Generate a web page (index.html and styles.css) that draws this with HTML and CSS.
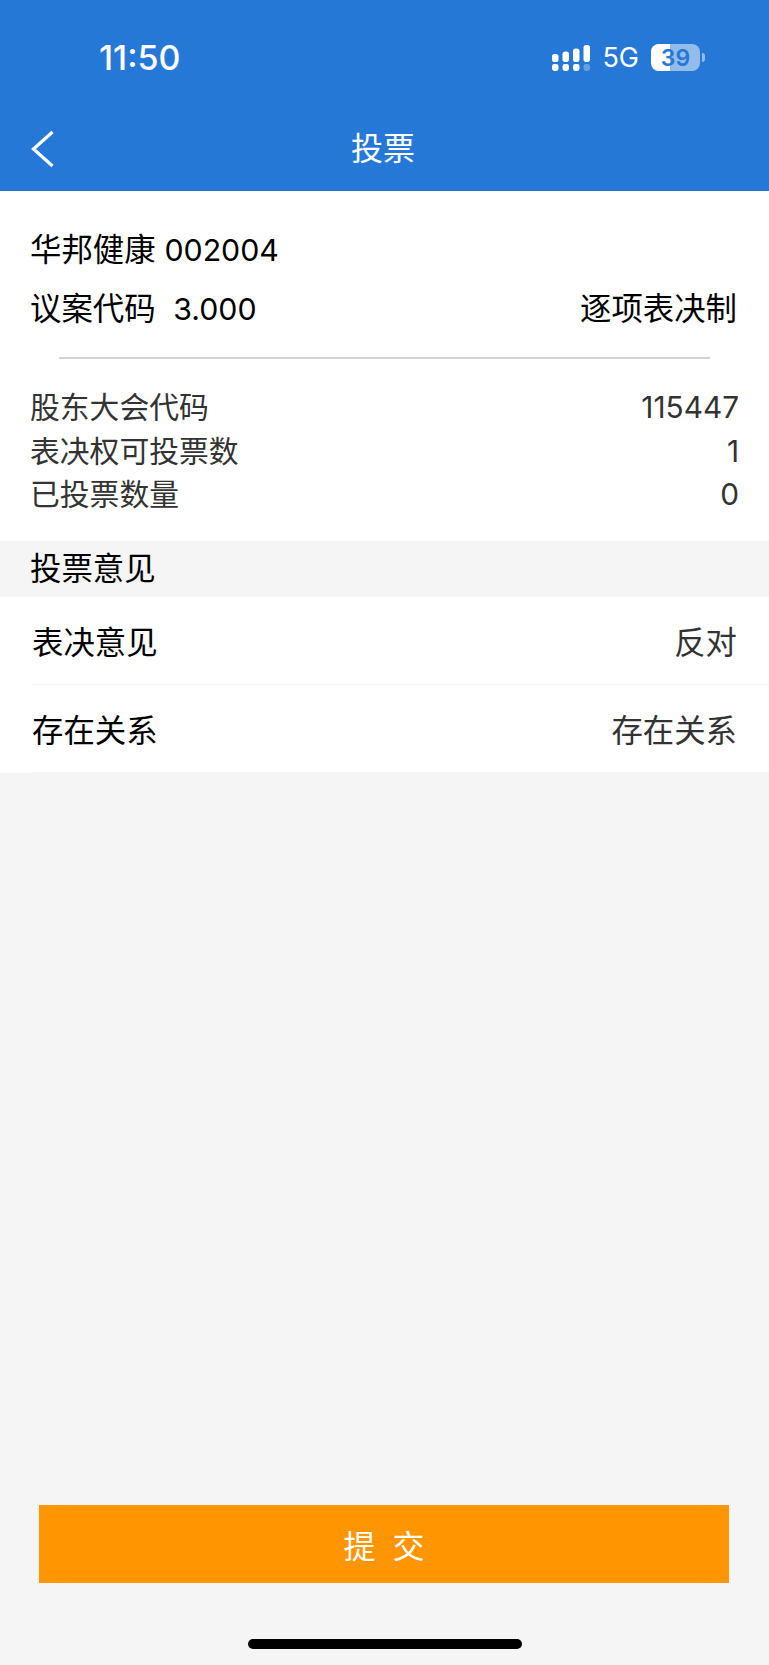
FILE: index.html
```html
<!DOCTYPE html>
<html lang="zh-CN">
<head>
    <meta charset="UTF-8">
    <meta name="viewport" content="width=device-width, initial-scale=1.0">
    <title>投票</title>
    <link rel="stylesheet" href="styles.css">
</head>
<body>
    <div class="page">
        <header class="top">
            <div class="status-bar">
                <span class="clock">11:50</span>
                <div class="status-right">
                    <svg class="signal" width="38" height="26" viewBox="0 0 38 26">
                        <rect x="0" y="9" width="6.5" height="8" rx="2.6" fill="#fff"/>
                        <rect x="10.5" y="6.5" width="6.5" height="10.5" rx="2.8" fill="#fff"/>
                        <rect x="21" y="3.5" width="6.5" height="13.5" rx="2.8" fill="#fff"/>
                        <rect x="31.5" y="0" width="6.5" height="17" rx="2.8" fill="#fff"/>
                        <rect x="0" y="19" width="6.5" height="7" rx="2.4" fill="#fff"/>
                        <rect x="10.5" y="19" width="6.5" height="7" rx="2.4" fill="#fff"/>
                        <rect x="21" y="19" width="6.5" height="7" rx="2.4" fill="#fff"/>
                        <rect x="31.5" y="19" width="6.5" height="7" rx="2.4" fill="#fff" opacity="0.3"/>
                    </svg>
                    <span class="network">5G</span>
                    <div class="battery">
                        <span class="battery-fill"></span>
                        <span class="battery-level">39</span>
                    </div>
                    <span class="battery-cap"></span>
                </div>
            </div>
            <div class="nav-bar">
                <svg class="back" width="26" height="38" viewBox="0 0 26 38">
                    <path d="M23.5 2 L4.5 19 L23.5 36" fill="none" stroke="#fff" stroke-width="3.2"/>
                </svg>
                <h1 class="nav-title">投票</h1>
            </div>
        </header>

        <section class="summary">
            <div class="summary-head">
                <p class="line">华邦健康 <span class="num">002004</span></p>
                <p class="line line-split"><span>议案代码&nbsp;&nbsp;<span class="num">3.000</span></span><span>逐项表决制</span></p>
            </div>
            <div class="divider"></div>
            <div class="summary-info">
                <p class="info-row"><span>股东大会代码</span><span>115447</span></p>
                <p class="info-row"><span>表决权可投票数</span><span>1</span></p>
                <p class="info-row"><span>已投票数量</span><span>0</span></p>
            </div>
        </section>

        <div class="section-title">投票意见</div>

        <section class="options">
            <div class="option-row"><span class="option-name">表决意见</span><span class="option-value">反对</span></div>
            <div class="option-row"><span class="option-name">存在关系</span><span class="option-value">存在关系</span></div>
        </section>

        <div class="spacer"></div>

        <button class="btn-submit">提 交</button>
        <div class="home-bar"></div>
    </div>
</body>
</html>
```

FILE: styles.css
```css
body {
    margin: 0;
    background-color: #f5f5f5;
    font-family: Inter, "Noto Sans CJK SC", sans-serif;
    color: #000;
}
p {
    margin: 0;
}
.page {
    display: flex;
    flex-direction: column;
    min-height: 1665px;
}

/* blue header with status bar and title */
.top {
    height: 191px;
    background-color: #2678d6;
    color: #fff;
}
.status-bar {
    height: 108px;
    display: flex;
    justify-content: space-between;
    align-items: flex-start;
    box-sizing: border-box;
    padding: 39px 64px 0 99px;
}
.clock {
    font-size: 34px;
    font-weight: 500;
    line-height: 37px;
}
.status-right {
    display: flex;
    align-items: center;
    height: 37px;
}
.signal {
    margin-right: 12px;
}
.network {
    font-size: 27px;
    margin-right: 12px;
}
.battery {
    display: flex;
    justify-content: center;
    align-items: center;
    position: relative;
    width: 49px;
    height: 27px;
    border-radius: 8px;
    overflow: hidden;
    background-color: rgba(255, 255, 255, 0.5);
}
.battery-fill {
    position: absolute;
    left: 0;
    top: 0;
    bottom: 0;
    width: 39%;
    background-color: #fff;
}
.battery-level {
    position: relative;
    font-size: 23px;
    font-weight: 600;
    color: #2678d6;
}
.battery-cap {
    width: 3px;
    height: 9px;
    margin-left: 2px;
    border-radius: 0 3px 3px 0;
    background-color: rgba(255, 255, 255, 0.5);
}
.nav-bar {
    position: relative;
    height: 83px;
    box-sizing: border-box;
    padding: 0 3px 8px 0;
    display: flex;
    justify-content: center;
    align-items: center;
}
.back {
    position: absolute;
    left: 29px;
    top: 22px;
}
.nav-title {
    margin: 0;
    font-size: 32px;
    font-weight: normal;
}

/* stock and meeting details */
.summary {
    background-color: #fff;
    padding-top: 30px;
    height: 350px;
    box-sizing: border-box;
}
.summary-head {
    padding: 0 32px 0 30px;
}
.line {
    font-size: 31.4px;
    line-height: 59px;
}
.line-split {
    display: flex;
    justify-content: space-between;
}
.num {
    font-size: 30.3px;
}
.divider {
    height: 2px;
    margin: 18px 59px 0;
    background-color: #d4d4d4;
}
.summary-info {
    padding: 27px 30px 0;
}
.info-row {
    display: flex;
    justify-content: space-between;
    font-size: 29.8px;
    line-height: 43.5px;
    color: #333;
}

.section-title {
    height: 56px;
    padding-left: 30px;
    font-size: 31.4px;
    line-height: 56px;
    background-color: #f5f5f5;
}

/* opinion rows */
.options {
    background-color: #fff;
    padding-left: 32px;
}
.option-row {
    display: flex;
    justify-content: space-between;
    align-items: center;
    height: 87px;
    padding-right: 32px;
    border-bottom: 1px solid #f4f4f4;
    font-size: 31.4px;
}
.option-value {
    color: #333;
}

.spacer {
    flex: 1;
}
.btn-submit {
    display: block;
    margin: 0 40px 0 39px;
    height: 78px;
    border: none;
    background-color: #ff9500;
    color: #fff;
    font-family: inherit;
    font-size: 32px;
    word-spacing: 8px;
}
.home-bar {
    width: 274px;
    height: 10px;
    margin: 56px auto 16px;
    border-radius: 5px;
    background-color: #000;
}
```
